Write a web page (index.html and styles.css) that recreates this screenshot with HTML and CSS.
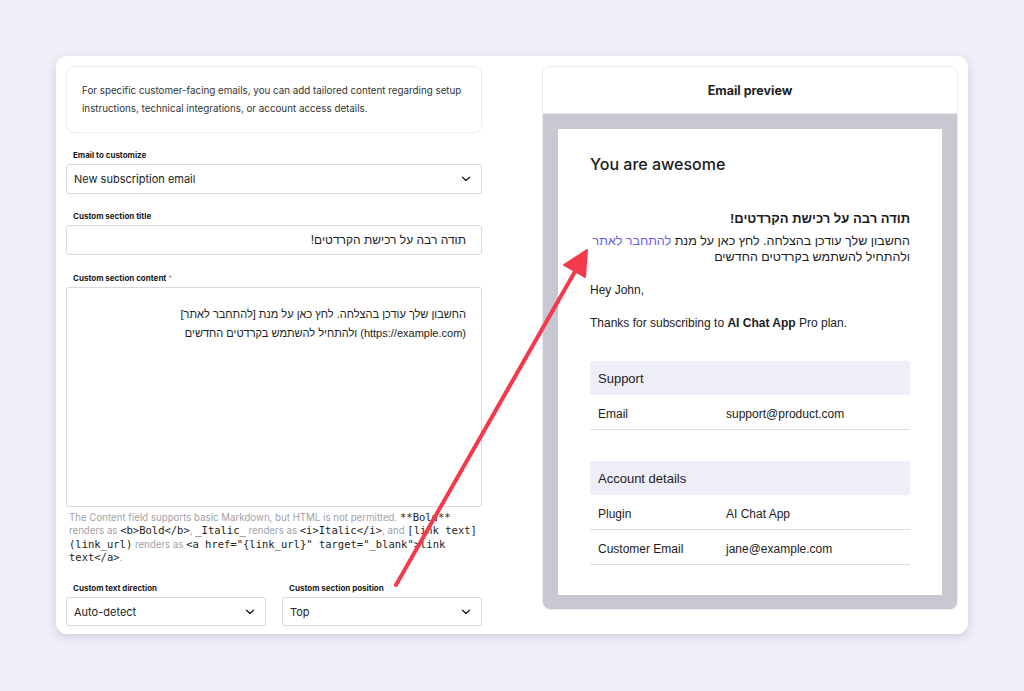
FILE: index.html
```html
<!DOCTYPE html>
<html lang="en">
<head>
    <meta charset="UTF-8">
    <meta name="viewport" content="width=device-width, initial-scale=1.0">
    <title>Custom email content</title>
    <link rel="stylesheet" href="styles.css">
</head>
<body>
    <div class="card">
        <div class="settings">
            <div class="info-box">
                <p>For specific customer-facing emails, you can add tailored content regarding setup instructions, technical integrations, or account access details.</p>
            </div>

            <div class="form-group">
                <label>Email to customize</label>
                <div class="select">
                    <span>New subscription email</span>
                    <svg class="chevron" width="10" height="6" viewBox="0 0 10 6"><path d="M1.5 1.2 5 4.6 8.5 1.2" fill="none" stroke="#222" stroke-width="1.4" stroke-linecap="round" stroke-linejoin="round"/></svg>
                </div>
            </div>

            <div class="form-group">
                <label>Custom section title</label>
                <div class="input" dir="rtl">תודה רבה על רכישת הקרדטים!</div>
            </div>

            <div class="form-group form-group-content">
                <label>Custom section content <span class="req">*</span></label>
                <div class="textarea" dir="rtl">החשבון שלך עודכן בהצלחה. לחץ כאן על מנת [להתחבר לאתר]<br>(https://example.com) ולהתחיל להשתמש בקרדטים החדשים</div>
                <p class="help">The Content field supports basic Markdown, but HTML is not permitted. <code>**Bold**</code> renders as <code>&lt;b&gt;Bold&lt;/b&gt;</code>, <code>_Italic_</code> renders as <code>&lt;i&gt;Italic&lt;/i&gt;</code>, and <code>[link text](link_url)</code> renders as <code>&lt;a href="{link_url}" target="_blank"&gt;link text&lt;/a&gt;</code>.</p>
            </div>

            <div class="form-row">
                <div class="form-group">
                    <label>Custom text direction</label>
                    <div class="select">
                        <span>Auto-detect</span>
                        <svg class="chevron" width="10" height="6" viewBox="0 0 10 6"><path d="M1.5 1.2 5 4.6 8.5 1.2" fill="none" stroke="#222" stroke-width="1.4" stroke-linecap="round" stroke-linejoin="round"/></svg>
                    </div>
                </div>
                <div class="form-group">
                    <label>Custom section position</label>
                    <div class="select">
                        <span>Top</span>
                        <svg class="chevron" width="10" height="6" viewBox="0 0 10 6"><path d="M1.5 1.2 5 4.6 8.5 1.2" fill="none" stroke="#222" stroke-width="1.4" stroke-linecap="round" stroke-linejoin="round"/></svg>
                    </div>
                </div>
            </div>
        </div>

        <div class="preview">
            <div class="preview-header">Email preview</div>
            <div class="preview-frame">
                <div class="email">
                    <h2 class="email-title">You are awesome</h2>

                    <div class="custom-section" dir="rtl">
                        <h3>תודה רבה על רכישת הקרדטים!</h3>
                        <p>החשבון שלך עודכן בהצלחה. לחץ כאן על מנת <a href="#">להתחבר לאתר</a> ולהתחיל להשתמש בקרדטים החדשים</p>
                    </div>

                    <p class="email-text">Hey John,</p>
                    <p class="email-text">Thanks for subscribing to <strong>AI Chat App</strong> Pro plan.</p>

                    <div class="details">
                        <div class="details-head">Support</div>
                        <div class="details-row"><span>Email</span><span>support@product.com</span></div>
                    </div>

                    <div class="details">
                        <div class="details-head">Account details</div>
                        <div class="details-row"><span>Plugin</span><span>AI Chat App</span></div>
                        <div class="details-row"><span>Customer Email</span><span>jane@example.com</span></div>
                    </div>
                </div>
            </div>
        </div>
    </div>

    <!-- annotation arrow -->
    <svg class="arrow" width="1024" height="691" viewBox="0 0 1024 691">
        <line x1="396" y1="585" x2="577" y2="268" stroke="#f43a4c" stroke-width="4" stroke-linecap="round"/>
        <polygon points="587,250 585,277 564,265" fill="#f43a4c" stroke="#f43a4c" stroke-width="2" stroke-linejoin="round"/>
    </svg>
</body>
</html>
```

FILE: styles.css
```css
* {
    box-sizing: border-box;
}
body {
    margin: 0;
    width: 1024px;
    height: 691px;
    overflow: hidden;
    background-color: #efeff8;
    font-family: 'Inter', 'Liberation Sans', sans-serif;
    color: #222;
    position: relative;
}
.card {
    position: absolute;
    left: 56px;
    top: 56px;
    width: 912px;
    height: 578px;
    background-color: white;
    border-radius: 11px;
    box-shadow: 0 3px 10px rgba(60,60,90,0.18);
    padding: 10px;
    display: grid;
    grid-template-columns: 416px 416px;
    column-gap: 60px;
}
.info-box {
    border: 1px solid #ececf2;
    border-radius: 8px;
    padding: 15px 10px 13px 15px;
    height: 67px;
}
.info-box p {
    margin: 0;
    font-size: 9.8px;
    line-height: 18px;
    color: #333;
}
.form-group {
    display: flex;
    flex-direction: column;
    margin-top: 17px;
}
.form-group label {
    font-size: 8px;
    font-weight: 700;
    line-height: 11px;
    padding-left: 7px;
    margin-bottom: 3px;
    color: #1a1a1a;
}
.form-group-content {
    margin-top: 18px;
}
.req {
    color: #999;
    font-weight: 400;
}
.select, .input {
    height: 30px;
    border: 1px solid #d8d8e0;
    border-radius: 3px;
    display: flex;
    align-items: center;
    padding: 0 8px 0 7px;
    font-size: 11px;
    color: #222;
}
.select {
    justify-content: space-between;
}
.chevron {
    margin-right: 2px;
}
.input {
    font-family: 'Liberation Sans', sans-serif;
    font-size: 12px;
    padding: 0 15px;
}
.textarea {
    height: 220px;
    border: 1px solid #d8d8e0;
    border-radius: 3px;
    padding: 17px 15px 15px 15px;
    font-family: 'Liberation Sans', sans-serif;
    font-size: 11px;
    line-height: 19px;
}
.help {
    margin: 4px 0 0 3px;
    font-size: 9.7px;
    line-height: 13.3px;
    color: #a2a2a8;
}
.help code {
    font-family: 'DejaVu Sans Mono', monospace;
    font-size: 10.5px;
    line-height: 13.3px;
    color: #222;
}
.form-row {
    display: grid;
    grid-template-columns: 200px 200px;
    column-gap: 16px;
    margin-top: 4px;
}
.form-row .form-group {
    margin-top: 15px;
}
.form-row .select {
    height: 29px;
}

/* preview panel */
.preview {
    border: 1px solid #ececf2;
    border-radius: 8px;
    height: 544px;
    display: flex;
    flex-direction: column;
    overflow: hidden;
}
.preview-header {
    height: 47px;
    display: flex;
    align-items: center;
    justify-content: center;
    font-size: 12.5px;
    font-weight: 700;
    border-bottom: 1px solid #e6e6ee;
}
.preview-frame {
    flex: 1;
    background-color: #c8c8d3;
    padding: 15px 15px 14px 15px;
}
.email {
    background-color: white;
    height: 100%;
    padding: 24px 32px 0 32px;
    font-family: 'Liberation Sans', Arial, sans-serif;
    font-size: 12px;
    color: #1c1c1c;
}
.email-title {
    font-family: 'Inter', sans-serif;
    font-size: 16px;
    font-weight: 500;
    line-height: 22px;
    margin: 0;
}
.custom-section {
    margin-top: 36px;
}
.custom-section h3 {
    margin: 0 0 6px 0;
    font-size: 13px;
    line-height: 16px;
}
.custom-section p {
    margin: 0;
    font-size: 12.5px;
    line-height: 16px;
}
.custom-section a {
    color: #6a5cf0;
    text-decoration: none;
}
.email-text {
    margin: 17px 0 0 0;
    line-height: 16px;
}
.details {
    margin-top: 31px;
}
.email-text + .details {
    margin-top: 30px;
}
.details-head {
    background-color: #eeeef8;
    border-radius: 3px;
    height: 34px;
    display: flex;
    align-items: center;
    padding-left: 8px;
    font-size: 13px;
}
.details-row {
    display: grid;
    grid-template-columns: 128px 1fr;
    height: 35px;
    align-items: center;
    padding: 3px 0 0 8px;
    border-bottom: 1px solid #dcdce2;
}
.arrow {
    position: absolute;
    left: 0;
    top: 0;
    pointer-events: none;
}
```
